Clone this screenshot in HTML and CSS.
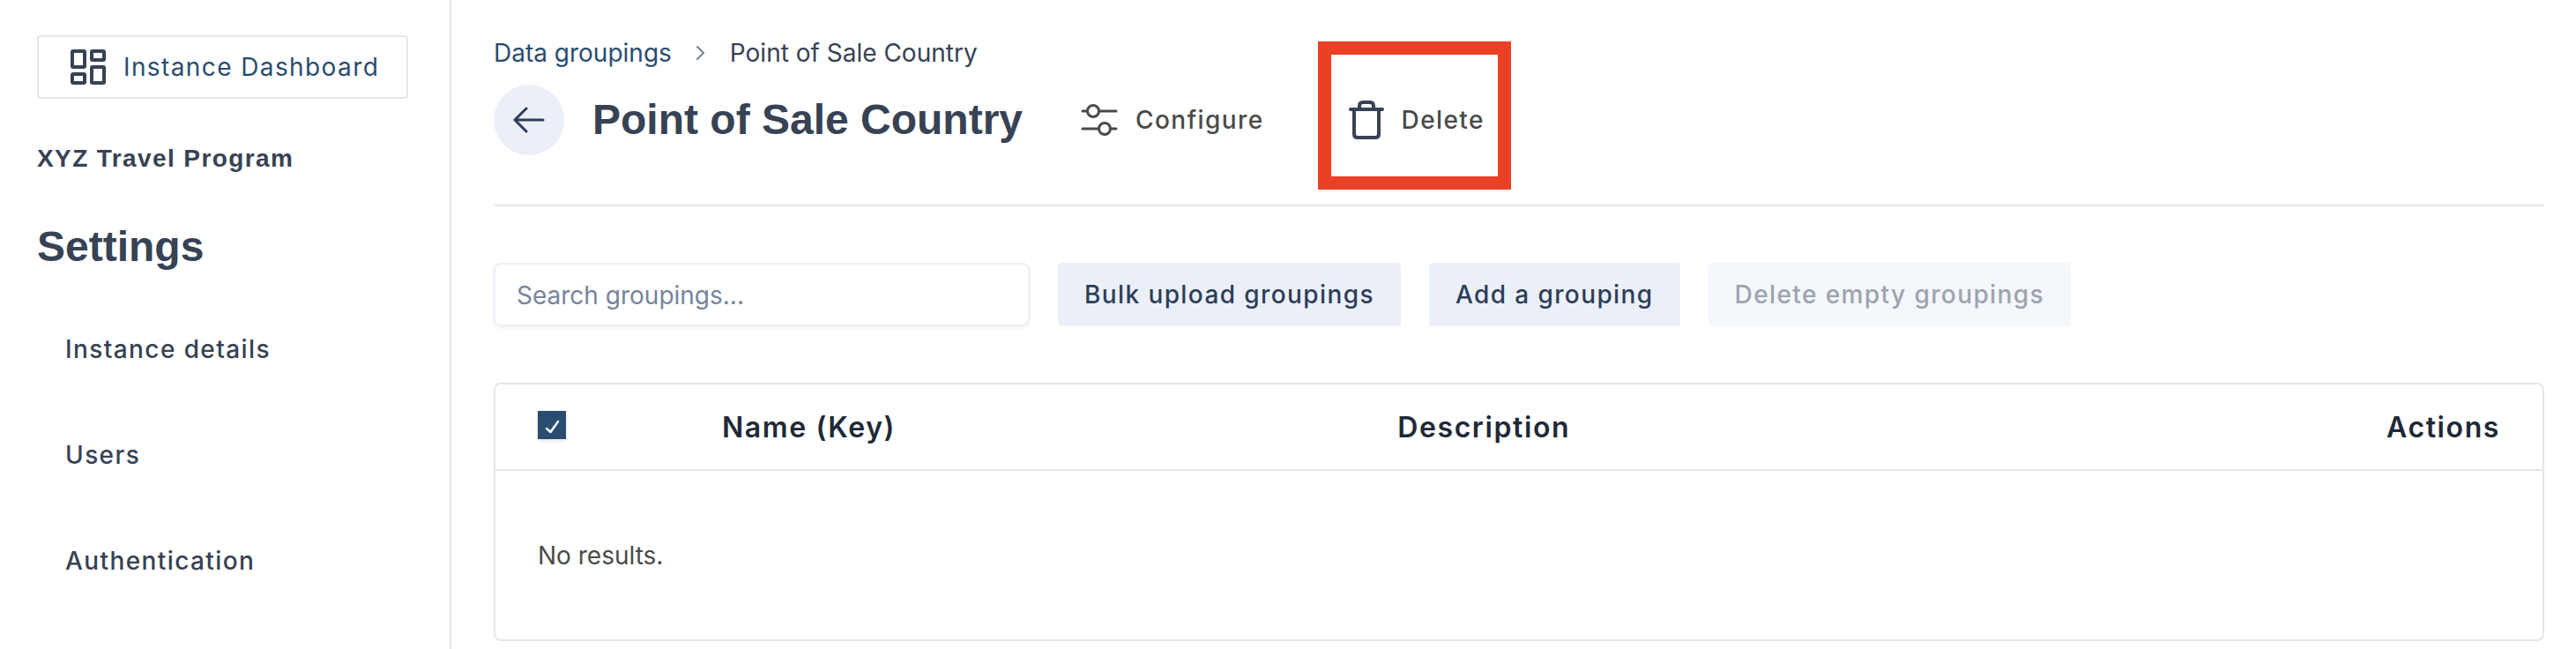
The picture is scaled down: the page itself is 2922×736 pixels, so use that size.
FILE: index.html
```html
<!DOCTYPE html>
<html lang="en">
<head>
    <meta charset="UTF-8">
    <meta name="viewport" content="width=device-width, initial-scale=1.0">
    <title>Point of Sale Country</title>
    <link rel="stylesheet" href="styles.css">
</head>
<body>
    <!-- Sidebar -->
    <aside class="sidebar">
        <a class="dashboard-link" href="#">
            <svg class="dashboard-icon" viewBox="0 0 40 40" fill="none" stroke="currentColor" stroke-width="4" stroke-linejoin="round">
                <rect x="2" y="2" width="14" height="18" rx="1"/>
                <rect x="24" y="2" width="14" height="10" rx="1"/>
                <rect x="2" y="28" width="14" height="10" rx="1"/>
                <rect x="24" y="20" width="14" height="18" rx="1"/>
            </svg>
            <span>Instance Dashboard</span>
        </a>
        <p class="program-name">XYZ Travel Program</p>
        <h2 class="sidebar-title">Settings</h2>
        <nav class="sidebar-nav">
            <a href="#">Instance details</a>
            <a href="#">Users</a>
            <a href="#">Authentication</a>
        </nav>
    </aside>

    <!-- Main content area -->
    <main class="content">
        <header class="page-header">
            <nav class="breadcrumb">
                <a href="#">Data groupings</a>
                <svg class="chevron" viewBox="0 0 10 18" fill="none" stroke="currentColor" stroke-width="2" stroke-linecap="round" stroke-linejoin="round">
                    <path d="M1 2l7 7-7 7"/>
                </svg>
                <span>Point of Sale Country</span>
            </nav>
            <div class="title-row">
                <button class="back-button" type="button" aria-label="Back">
                    <svg viewBox="0 0 36 30" fill="none" stroke="currentColor" stroke-width="3" stroke-linecap="round" stroke-linejoin="round">
                        <path d="M34 15H2M15 2L2 15l13 13"/>
                    </svg>
                </button>
                <h1>Point of Sale Country</h1>
                <button class="action configure" type="button">
                    <svg class="configure-icon" viewBox="0 0 42 36" fill="none" stroke="currentColor" stroke-width="3" stroke-linecap="round">
                        <path d="M2 8h5M22 8h18M2 28h18M35 28h5"/>
                        <circle cx="14" cy="8" r="6.5"/>
                        <circle cx="27" cy="28" r="6.5"/>
                    </svg>
                    <span>Configure</span>
                </button>
                <button class="action delete" type="button">
                    <svg class="delete-icon" viewBox="0 0 40 44" fill="none" stroke="currentColor" stroke-width="4" stroke-linecap="round" stroke-linejoin="round">
                        <path d="M2 10h36M6 10v28q0 4 4 4h20q4 0 4-4V10M12 10V6q0-4 4-4h8q4 0 4 4v4"/>
                    </svg>
                    <span>Delete</span>
                </button>
            </div>
        </header>

        <!-- Search and buttons -->
        <div class="toolbar">
            <input class="search" type="text" placeholder="Search groupings..." aria-label="Search groupings">
            <button class="btn" type="button">Bulk upload groupings</button>
            <button class="btn" type="button">Add a grouping</button>
            <button class="btn" type="button" disabled>Delete empty groupings</button>
        </div>

        <!-- Groupings table -->
        <div class="table-box">
            <table>
                <thead>
                    <tr>
                        <th class="col-select">
                            <label class="checkbox">
                                <input type="checkbox" aria-label="Select all" checked>
                                <svg viewBox="0 0 32 32" fill="none" stroke="currentColor" stroke-width="2.5" stroke-linecap="round" stroke-linejoin="round">
                                    <path d="M10 20l4.500 4L23 12"/>
                                </svg>
                            </label>
                        </th>
                        <th class="col-name">Name (Key)</th>
                        <th>Description</th>
                        <th class="col-actions">Actions</th>
                    </tr>
                </thead>
                <tbody>
                    <tr>
                        <td colspan="4">No results.</td>
                    </tr>
                </tbody>
            </table>
        </div>
    </main>
</body>
</html>
```
FILE: styles.css
```css
* {
    box-sizing: border-box;
}

body {
    margin: 0;
    display: flex;
    min-height: 100vh;
    background-color: #fff;
    color: #374254;
    font-family: Inter, "Liberation Sans", sans-serif;
    font-size: 28px;
    line-height: 40px;
}

a {
    color: inherit;
    text-decoration: none;
}

button,
input {
    font: inherit;
}

button {
    border: none;
    cursor: pointer;
}

svg {
    display: block;
    flex: none;
}

/* Sidebar */
.sidebar {
    flex: none;
    width: 512px;
    padding: 40px 47px 0 42px;
    border-right: 2px solid #e5e7eb;
}

.dashboard-link {
    display: flex;
    align-items: center;
    gap: 20px;
    height: 72px;
    padding: 0 36px;
    border: 2px solid #e5e7eb;
    border-radius: 4px;
    letter-spacing: 0.05em;
    white-space: nowrap;
}

.dashboard-link span {
    color: #2a4c70;
}

.dashboard-icon {
    width: 40px;
    height: 40px;
}

.program-name {
    margin: 48px 0 0;
    font-family: "Liberation Sans", Arial, sans-serif;
    font-weight: bold;
    letter-spacing: 0.05em;
}

.sidebar-title {
    margin: 48px 0 0;
    font-family: "Liberation Sans", Arial, sans-serif;
    font-size: 48px;
    line-height: 64px;
}

.sidebar-nav {
    display: flex;
    flex-direction: column;
    gap: 80px;
    margin-top: 64px;
    padding-left: 32px;
    font-weight: 500;
    letter-spacing: 0.05em;
}

/* Page header */
.content {
    flex: 1;
    min-width: 0;
    padding: 40px 36px 0 48px;
}

.page-header {
    padding-bottom: 56px;
    border-bottom: 2px solid #e5e7eb;
}

.breadcrumb {
    display: flex;
    align-items: center;
    gap: 28px;
}

.breadcrumb a {
    color: #2a4c70;
}

.chevron {
    width: 10px;
    height: 18px;
    color: #718096;
}

.title-row {
    display: flex;
    align-items: center;
    margin-top: 16px;
}

.back-button {
    display: flex;
    align-items: center;
    justify-content: center;
    width: 80px;
    height: 80px;
    padding: 0;
    border-radius: 50%;
    background-color: #ebf0f8;
    color: #2d3d5a;
}

.back-button svg {
    width: 36px;
    height: 30px;
}

h1 {
    margin: 0 0 0 32px;
    font-family: "Liberation Sans", Arial, sans-serif;
    font-size: 48px;
    line-height: 64px;
}

.action {
    position: relative;
    display: flex;
    align-items: center;
    gap: 20px;
    padding: 0;
    background: none;
    color: #4a4a4a;
    font-weight: 500;
    letter-spacing: 0.05em;
}

.configure {
    margin-left: 66px;
}

.configure-icon {
    width: 42px;
    height: 36px;
}

.delete {
    margin-left: 96px;
}

.delete-icon {
    width: 40px;
    height: 44px;
    color: #374254;
}

/* Red frame around the delete action */
.delete::after {
    content: "";
    position: absolute;
    top: -67px;
    bottom: -57px;
    left: -35px;
    right: -30px;
    border: 15px solid #ea4025;
}

/* Toolbar */
.toolbar {
    display: flex;
    gap: 32px;
    margin-top: 64px;
}

.search {
    width: 608px;
    height: 72px;
    padding: 2px 24px 0;
    border: 2px solid #ebf0f8;
    border-radius: 8px;
    box-shadow: 0 2px 4px rgba(0, 0, 0, 0.06);
    color: #374254;
}

.search::placeholder {
    color: #76849b;
    opacity: 1;
}

.btn {
    height: 72px;
    padding: 0 30px;
    border-radius: 4px;
    background-color: #ebf0f8;
    color: #2d3d5a;
    font-weight: 500;
    letter-spacing: 0.05em;
    white-space: nowrap;
}

.btn:disabled {
    background-color: #f4f7fb;
    color: #9ca3b0;
    cursor: default;
}

/* Table */
.table-box {
    margin-top: 64px;
    border: 2px solid #e5e7eb;
    border-radius: 8px;
}

table {
    width: 100%;
    table-layout: fixed;
    border-collapse: separate;
    border-spacing: 0;
}

th {
    height: 98px;
    padding: 2px 48px 0;
    border-bottom: 2px solid #e5e7eb;
    color: #1f2937;
    font-size: 32px;
    font-weight: 600;
    letter-spacing: 0.05em;
    text-align: left;
}

td {
    height: 191px;
    padding: 0 48px;
    color: #4a4a4a;
}

.col-select {
    width: 9%;
    padding: 0 48px 4px;
}

.col-name {
    width: 33%;
}

.col-actions {
    text-align: right;
}

.checkbox {
    display: grid;
    width: 32px;
    height: 32px;
    color: #fff;
}

.checkbox input,
.checkbox svg {
    grid-area: 1 / 1;
    width: 32px;
    height: 32px;
    margin: 0;
}

.checkbox input {
    appearance: none;
    background-color: #2a4c70;
    box-shadow: 0 2px 4px rgba(0, 0, 0, 0.1);
}

.checkbox svg {
    z-index: 1;
    pointer-events: none;
}
```
